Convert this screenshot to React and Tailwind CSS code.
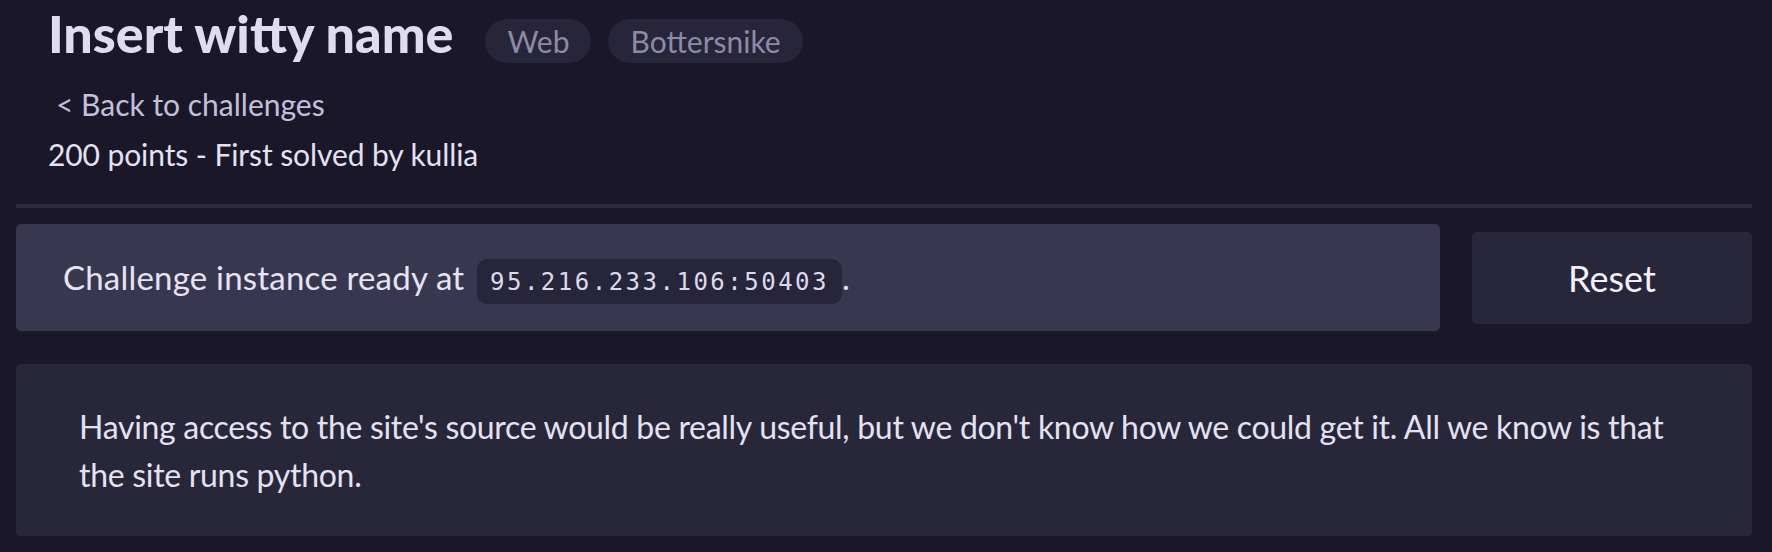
import React from "react";

const Tag = ({ children }) => (
  <span className="inline-block rounded-full bg-[#26253a] px-[22px] text-[30px] leading-[44px] text-[#8d8aa6]">
    {children}
  </span>
);

const App = () => {
  return (
    <div className="min-h-screen bg-[#1a1828] pl-4 pr-5 pt-[1px] font-['Lato',sans-serif]">
      <header className="pl-[32px]">
        <div className="flex items-baseline gap-[17px] pt-[2px]">
          <h1 className="mr-[15px] text-[52px] font-black leading-[60px] text-[#dedcf0]">
            Insert witty name
          </h1>
          <Tag>Web</Tag>
          <Tag>Bottersnike</Tag>
        </div>
        <a
          href="#"
          className="mt-[19px] block pl-[8px] text-[30px] leading-[45px] text-[#c3c0de]"
        >
          &lt; Back to challenges
        </a>
        <p className="mt-[5px] text-[30px] leading-[45px] tracking-[-0.1px] text-[#e4e2f2]">
          200 points - First solved by kullia
        </p>
      </header>

      <div className="mt-[27px] h-[4px] bg-[#2b2a3e]" />

      <div className="mt-[16px] flex items-center gap-[32px]">
        <div className="flex-1 rounded-[5px] bg-[#383750] pl-[47px] pt-[29px] pb-[27px] text-[33px] leading-[48px] tracking-[0.2px] text-[#e6e4f4]">
          Challenge instance ready at{" "}
          <code className="ml-[4px] inline-block rounded-[10px] bg-[#26253a] px-[13px] pt-[8px] pb-[6px] font-['DejaVu_Sans_Mono',monospace] text-[24px] leading-[31px] tracking-[2.5px] text-[#dcdaea]">
            95.216.233.106:50403
          </code>
          .
        </div>
        <button className="h-[92px] w-[280px] rounded-[5px] bg-[#27263a] text-[36px] text-[#f2f1f8]">
          Reset
        </button>
      </div>

      <div className="mt-[33px] rounded-[5px] bg-[#28273a] px-[63px] pt-[39px] pb-[37px] text-[32px] leading-[48px] tracking-[-0.3px] text-[#e4e2f2]">
        Having access to the site's source would be really useful, but we don't
        know how we could get it. All we know is that the site runs python.
      </div>
    </div>
  );
};

export default App;
